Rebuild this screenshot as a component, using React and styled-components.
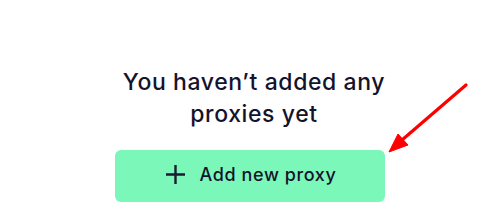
import React from 'react'
import styled, { createGlobalStyle } from 'styled-components';

const GlobalStyle = createGlobalStyle`
  html, body {
    margin: 0;
    padding: 0;
    background: #ffffff;
  }
`

function App() {
  return (
    <>
      <GlobalStyle />
      <Page>
        <Empty>
          <Title>You haven’t added any<br />proxies yet</Title>
          <AddButton>
            <svg width="19" height="19" viewBox="0 0 19 19" fill="none">
              <path d="M9.5 0v19M0 9.5h19" stroke="#1b1a35" strokeWidth="2.4" />
            </svg>
            <span>Add new proxy</span>
          </AddButton>
        </Empty>
        <Arrow width="90" height="80" viewBox="0 0 90 80">
          <path d="M80 4 L16 59" stroke="#ff0000" strokeWidth="3.2" strokeLinecap="round" />
          <path d="M3 71 L12 53 L22 64 Z" fill="#ff0000" stroke="#ff0000" strokeWidth="1" strokeLinejoin="round" />
        </Arrow>
      </Page>
    </>
  )
}

const Page = styled.div`
  position: relative;
  width: 500px;
  height: 208px;
  overflow: hidden;
  font-family: Inter, "Liberation Sans", sans-serif;
`

const Empty = styled.div`
  display: flex;
  flex-direction: column;
  align-items: center;
  padding-top: 66px;
`

const Title = styled.h2`
  margin: 0 0 0 8px;
  font-size: 23px;
  font-weight: 500;
  letter-spacing: 0.6px;
  line-height: 32px;
  text-align: center;
  color: #15132b;
`

const AddButton = styled.button`
  margin-top: 20px;
  width: 270px;
  height: 52px;
  border: none;
  border-radius: 6px;
  background: #7af7b9;
  display: flex;
  align-items: center;
  justify-content: center;
  gap: 15px;
  padding: 0 0 3px 2px;
  font-family: inherit;
  font-size: 18px;
  font-weight: 500;
  letter-spacing: 0.6px;
  color: #15132b;
  cursor: pointer;
`

const Arrow = styled.svg`
  position: absolute;
  left: 386px;
  top: 81px;
`

export default App
